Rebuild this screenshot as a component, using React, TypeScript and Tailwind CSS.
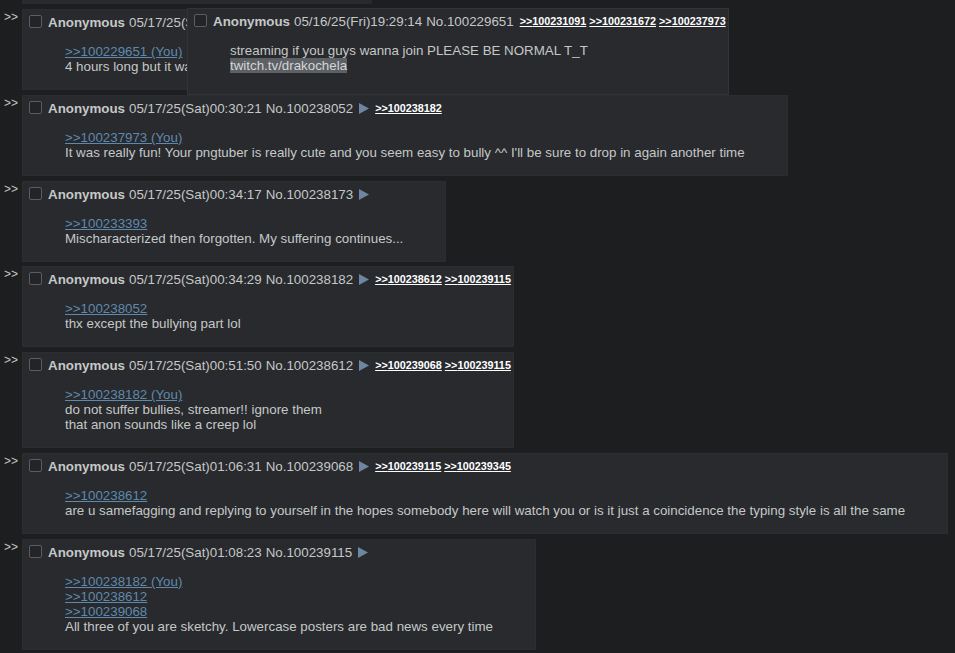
import React from "react";

type Post = {
  no: string;
  date: string;
  backlinks?: string[];
  quotes: string[];
  lines: string[];
};

const posts: Post[] = [
  {
    no: "100237973",
    date: "05/17/25(Sat)00:21:48",
    backlinks: ["100238052"],
    quotes: [">>100229651 (You)"],
    lines: ["4 hours long but it was fun, thanks to everyone who came by"],
  },
  {
    no: "100238052",
    date: "05/17/25(Sat)00:30:21",
    backlinks: ["100238182"],
    quotes: [">>100237973 (You)"],
    lines: [
      "It was really fun! Your pngtuber is really cute and you seem easy to bully ^^ I'll be sure to drop in again another time",
    ],
  },
  {
    no: "100238173",
    date: "05/17/25(Sat)00:34:17",
    quotes: [">>100233393"],
    lines: ["Mischaracterized then forgotten. My suffering continues..."],
  },
  {
    no: "100238182",
    date: "05/17/25(Sat)00:34:29",
    backlinks: ["100238612", "100239115"],
    quotes: [">>100238052"],
    lines: ["thx except the bullying part lol"],
  },
  {
    no: "100238612",
    date: "05/17/25(Sat)00:51:50",
    backlinks: ["100239068", "100239115"],
    quotes: [">>100238182 (You)"],
    lines: ["do not suffer bullies, streamer!! ignore them", "that anon sounds like a creep lol"],
  },
  {
    no: "100239068",
    date: "05/17/25(Sat)01:06:31",
    backlinks: ["100239115", "100239345"],
    quotes: [">>100238612"],
    lines: [
      "are u samefagging and replying to yourself in the hopes somebody here will watch you or is it just a coincidence the typing style is all the same",
    ],
  },
  {
    no: "100239115",
    date: "05/17/25(Sat)01:08:23",
    quotes: [">>100238182 (You)", ">>100238612", ">>100239068"],
    lines: ["All three of you are sketchy. Lowercase posters are bad news every time"],
  },
];

function Checkbox() {
  return (
    <span className="ml-[4px] mr-[6px] inline-block h-[13px] w-[13px] shrink-0 rounded-[2px] border border-[#5b5d61] bg-[#232428]" />
  );
}

function MenuArrow() {
  return (
    <svg className="ml-[6px] h-[11px] w-[10px] shrink-0" viewBox="0 0 10 11" aria-hidden="true">
      <polygon points="0,0 10,5.5 0,11" fill="#6d86a1" />
    </svg>
  );
}

function Header({ post, arrow = true }: { post: Post; arrow?: boolean }) {
  return (
    <div className="flex h-[19px] items-center whitespace-nowrap">
      <Checkbox />
      <span className="flex items-center pt-[2px]">
        <span className="font-bold text-[#c5c8c6]">Anonymous</span>
        <span className="ml-[4px]">{post.date}</span>
        <span className="ml-[4px]">No.{post.no}</span>
        {arrow && <MenuArrow />}
        {post.backlinks && (
          <span className="ml-[6px] flex gap-[3px]">
            {post.backlinks.map((b) => (
              <a key={b} href="#" className="text-[10.8px] font-bold text-white underline">
                &gt;&gt;{b}
              </a>
            ))}
          </span>
        )}
      </span>
    </div>
  );
}

function PostBox({ post }: { post: Post }) {
  return (
    <div className="flex items-start">
      {/* side arrows */}
      <span className="w-[22px] shrink-0 pl-[4px] pt-[1px] text-[12px] leading-[15px] text-[#c5c8c6]">&gt;&gt;</span>
      <div className="border border-[#2b2d31] bg-[#282a2e] p-[2px]">
        <Header post={post} />
        <blockquote className="mx-[40px] my-[13px] whitespace-nowrap leading-[15px]">
          {post.quotes.map((q) => (
            <div key={q}>
              <a href="#" className="text-[#5f89ac] underline">
                {q}
              </a>
            </div>
          ))}
          {post.lines.map((l) => (
            <div key={l}>{l}</div>
          ))}
        </blockquote>
      </div>
    </div>
  );
}

export default function App() {
  return (
    <div
      className="relative h-[653px] w-[955px] overflow-hidden bg-[#1d1e20] text-[13.33px] leading-[15px] text-[#c5c8c6]"
      style={{ fontFamily: '"Liberation Sans", Arial, Helvetica, sans-serif' }}
    >
      <div className="flex flex-col gap-[4.75px]">
        {/* bottom of the post scrolled off the top */}
        <div className="ml-[22px] h-[4.25px] w-[350px] bg-[#282a2e]" />
        {posts.map((p) => (
          <PostBox key={p.no} post={p} />
        ))}
      </div>

      {/* hover preview of the quoted post */}
      <div className="absolute left-[187px] top-[8px] border border-[#313337] bg-[#282a2e] p-[2px] pb-[8px]">
        <Header
          arrow={false}
          post={{
            no: "100229651",
            date: "05/16/25(Fri)19:29:14",
            backlinks: ["100231091", "100231672", "100237973"],
            quotes: [],
            lines: [],
          }}
        />
        <blockquote className="mx-[40px] my-[13px] whitespace-nowrap leading-[15px]">
          <div>streaming if you guys wanna join PLEASE BE NORMAL T_T</div>
          <div>
            <span className="bg-[#5d6064] text-[#d4d6d5]">twitch.tv/drakochela</span>
          </div>
        </blockquote>
      </div>
    </div>
  );
}
